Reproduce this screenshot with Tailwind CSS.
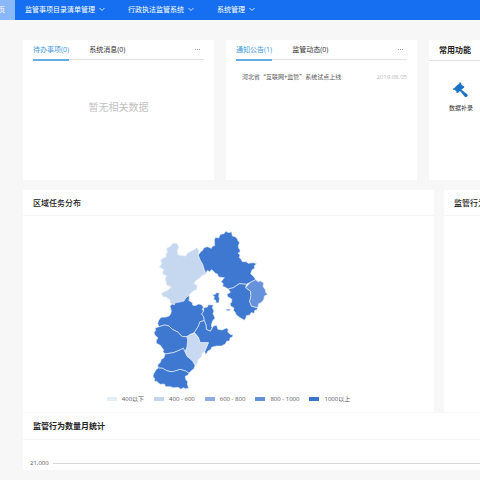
<!DOCTYPE html>
<html lang="zh-CN">
<head>
  <meta charset="UTF-8" />
  <meta name="viewport" content="width=device-width,initial-scale=1.0"/>
  <title>互联网+监管</title>
  <script src="https://cdn.jsdelivr.net/npm/@tailwindcss/browser@4"></script>
</head>
<body class="bg-[#f7f7f7] text-[#333] font-['Open_Sans','Noto_Sans_CJK_SC',sans-serif] overflow-x-hidden">
  <header class="h-5 bg-[#166ff0] text-white text-[7px] leading-5 overflow-hidden">
    <nav class="flex h-full">
      <a href="#" class="flex justify-end w-[15px] pr-[10px] bg-[#8ab7f7] whitespace-nowrap">首页</a>
      <button class="flex items-center gap-1 ml-[10px]">监管事项目录清单管理
        <svg class="w-[6px] h-[6px]" viewBox="0 0 6 6" fill="none" stroke="currentColor" stroke-width="0.8"><path d="M0.5 1L3 3.5L5.5 1"/></svg>
      </button>
      <button class="flex items-center gap-1 ml-[23px]">行政执法监管系统
        <svg class="w-[6px] h-[6px]" viewBox="0 0 6 6" fill="none" stroke="currentColor" stroke-width="0.8"><path d="M0.5 1L3 3.5L5.5 1"/></svg>
      </button>
      <button class="flex items-center gap-1 ml-[23px]">系统管理
        <svg class="w-[6px] h-[6px]" viewBox="0 0 6 6" fill="none" stroke="currentColor" stroke-width="0.8"><path d="M0.5 1L3 3.5L5.5 1"/></svg>
      </button>
    </nav>
  </header>

  <main class="pl-[23px] pt-5 pb-[10px]">
    <div class="grid grid-cols-[191fr_191fr_51fr] gap-3">
      <section class="bg-white h-[140px] px-[10px]">
        <div class="flex h-5 text-[7px] leading-5 border-b border-[#e4e4e4]">
          <button class="h-[21px] text-[#419be0] border-b-2 border-[#64aee6]">待办事项(0)</button>
          <button class="h-5 ml-5">系统消息(0)</button>
          <a href="#" class="ml-auto mr-1 flex items-center gap-px" aria-label="更多">
            <i class="size-px bg-gray-400"></i><i class="size-px bg-gray-400"></i><i class="size-px bg-gray-400"></i>
          </a>
        </div>
        <p class="pt-10 text-center text-[10px] leading-[14px] text-[#c2c2c2]">暂无相关数据</p>
      </section>

      <section class="bg-white h-[140px] px-[10px]">
        <div class="flex h-5 text-[7px] leading-5 border-b border-[#e4e4e4]">
          <button class="h-[21px] text-[#419be0] border-b-2 border-[#64aee6]">通知公告(1)</button>
          <button class="h-5 ml-5">监管动态(0)</button>
          <a href="#" class="ml-auto mr-1 flex items-center gap-px" aria-label="更多">
            <i class="size-px bg-gray-400"></i><i class="size-px bg-gray-400"></i><i class="size-px bg-gray-400"></i>
          </a>
        </div>
        <div class="flex justify-between pt-3 pl-[6px] text-[6px] leading-[10px] whitespace-nowrap">
          <a href="#" class="text-[#555] font-['Noto_Sans_CJK_SC',sans-serif]">河北省“互联网+监管”系统试点上线</a>
          <time class="text-[#bbb]">2019.08.05</time>
        </div>
      </section>

      <section class="bg-white h-[140px] overflow-hidden">
        <h2 class="h-[21px] pl-[10px] text-[8px] leading-5 font-bold text-[#222] border-b border-[#e4e4e4] whitespace-nowrap">常用功能</h2>
        <a href="#" class="flex flex-col items-center w-6 ml-5 pt-5">
          <svg class="size-4" viewBox="0 0 48 48" fill="#1a73c4">
            <path d="M20 3l5 3-1 3 6 6 4 1-1 4-8 6 14 11 5 4v4l-4 3h-4l-15-18-7 6-4-1 1-3-6-6-4 1-1-4 5-3 8-8 6-4z"/>
          </svg>
          <span class="text-[6px] leading-[10px] pt-[6px] whitespace-nowrap">数据补录</span>
        </a>
      </section>
    </div>

    <div class="grid grid-cols-[411fr_36fr] gap-[10px] mt-[10px]">
      <section class="bg-white h-[222px]">
        <h2 class="h-[26px] pl-[10px] text-[8px] leading-[25px] font-medium text-[#222] border-b border-[#f5f5f5]">区域任务分布</h2>
        <!-- 河北省地图 -->
        <svg class="block w-[125px] h-[170px] mt-[9px] ml-[31%]" viewBox="0 0 375 510" fill="#3f78d0" stroke="#e3ecf8" stroke-width="2" stroke-linejoin="round">
          <path fill="#c6d8f0" d="M62 64L68 55L82 56L86 66L82 76L84 90L94 92L108 93L111 86L120 80L130 76L140 68L147 76L144 90L150 104L158 118L160 132L168 146L156 152L148 160L136 168L132 176L142 182L139 194L130 197L124 204L118 208L117 218L112 224L98 230L84 240L66 238L60 232L60 224L48 216L40 215L34 206L42 200L54 196L64 186L50 180L48 170L46 162L50 152L40 148L38 142L42 134L28 126L36 116L32 108L34 102L48 96L48 87L52 84L50 70Z"/>
          <path d="M145 90L152 80L158 76L162 68L172 65L184 70L188 63L194 62L193 44L197 37L206 39L211 28L222 26L227 19L237 23L245 20L247 33L255 35L261 40L264 48L269 52L265 62L266 70L270 74L270 82L264 84L270 90L268 98L273 102L277 110L289 110L294 115L310 113L320 116L313 122L314 130L306 135L302 146L312 156L317 164L289 178L268 176L250 188L235 192L224 186L217 184L220 177L214 170L218 164L223 158L205 156L203 148L195 144L186 134L178 140L172 136L168 146L162 132L158 118L150 104Z"/>
          <path d="M235 192L250 188L268 176L289 178L287 188L301 198L303 212L299 230L305 244L323 248L320 256L315 255L312 265L303 263L300 270L289 272L288 278L283 286L277 282L270 278L259 270L255 261L250 256L252 249L242 243L240 236L245 231L245 222L233 215L231 208L241 202Z"/>
          <path fill="#6692dc" d="M287 188L301 172L317 164L325 170L332 168L341 174L339 184L346 194L347 202L353 208L343 213L342 222L335 232L326 236L323 248L305 244L299 230L303 212L301 198Z"/>
          <path d="M187 209L196 208L199 203L208 204L206 214L208 220L207 233L198 234L197 225L191 224L193 215ZM228 253L236 252L243 254L238 257L230 257Z"/>
          <path d="M60 244L66 237L73 239L76 233L90 231L102 228L108 218L117 211L118 222L116 226L127 233L128 240L135 242L146 237L155 239L160 246L157 254L161 258L155 267L161 275L163 287L150 290L146 302L133 323L120 329L112 335L97 335L83 321L67 313L57 303L44 300L27 305L23 296L26 286L33 277L48 276L57 273L62 267L64 258Z"/>
          <path d="M161 248L172 246L175 239L190 240L187 248L192 258L189 266L195 279L188 288L184 300L186 308L181 319L169 313L168 300L163 287L161 275L155 267L161 258Z"/>
          <path d="M150 290L163 287L168 300L169 313L181 319L190 303L200 301L204 313L216 315L230 309L235 314L233 321L242 329L249 329L247 336L240 339L239 347L230 349L226 357L214 363L200 363L191 365L185 367L182 374L174 378L167 390L164 378L170 365L175 353L150 353L145 337L133 323L146 302Z"/>
          <path fill="#c9d9f2" d="M110 335L120 329L133 323L145 337L150 353L175 353L170 365L165 378L158 383L153 397L145 402L141 418L135 421L128 409L120 401L112 395L105 381L111 365L113 345Z"/>
          <path d="M15 309L27 305L44 300L57 303L67 313L83 321L97 335L110 335L113 345L111 365L105 381L100 370L85 377L70 383L45 387L39 380L41 374L35 367L31 361L19 355L19 346L24 339L15 331L12 323L17 316Z"/>
          <path d="M45 387L70 383L85 377L100 370L105 381L112 395L120 401L128 409L135 421L132 431L124 437L117 445L107 438L90 433L73 439L63 440L50 437L38 430L25 429L23 420L31 412L34 403L42 398Z"/>
          <path d="M19 433L25 429L38 430L50 437L63 440L73 439L90 433L107 438L117 445L113 451L106 454L107 463L113 470L112 478L116 488L108 492L100 488L93 493L84 487L70 488L60 485L47 485L43 477L30 478L20 469L13 469L14 461L9 454L11 446Z"/>
        </svg>
        <ul class="flex justify-center gap-[10px] text-[6px] leading-[8px] text-[#555] whitespace-nowrap">
          <li class="flex items-center gap-[5px]"><i class="w-[10px] h-1 bg-[#e4edf6]"></i>400以下</li>
          <li class="flex items-center gap-[5px]"><i class="w-[10px] h-1 bg-[#c4d5ed]"></i>400 - 600</li>
          <li class="flex items-center gap-[5px]"><i class="w-[10px] h-1 bg-[#8eacdf]"></i>600 - 800</li>
          <li class="flex items-center gap-[5px]"><i class="w-[10px] h-1 bg-[#6490d8]"></i>800 - 1000</li>
          <li class="flex items-center gap-[5px]"><i class="w-[10px] h-1 bg-[#3b74cc]"></i>1000以上</li>
        </ul>
      </section>

      <section class="bg-white h-[222px] overflow-hidden">
        <h2 class="h-[26px] pl-[10px] text-[8px] leading-[25px] font-medium text-[#222] border-b border-[#f5f5f5] whitespace-nowrap">监管行为</h2>
      </section>
    </div>

    <section class="bg-white h-[57px] mt-px">
      <h2 class="h-[27px] pl-[10px] text-[8px] leading-[26px] font-bold text-[#222] border-b border-[#f5f5f5]">监管行为数量月统计</h2>
      <div class="flex items-center gap-1 pl-[7px] pt-[18px] text-[6px] leading-[10px] text-[#555]">
        <span>21,000</span>
        <span class="grow h-px bg-[#d8d8d8]"></span>
      </div>
    </section>
  </main>
</body>
</html>
